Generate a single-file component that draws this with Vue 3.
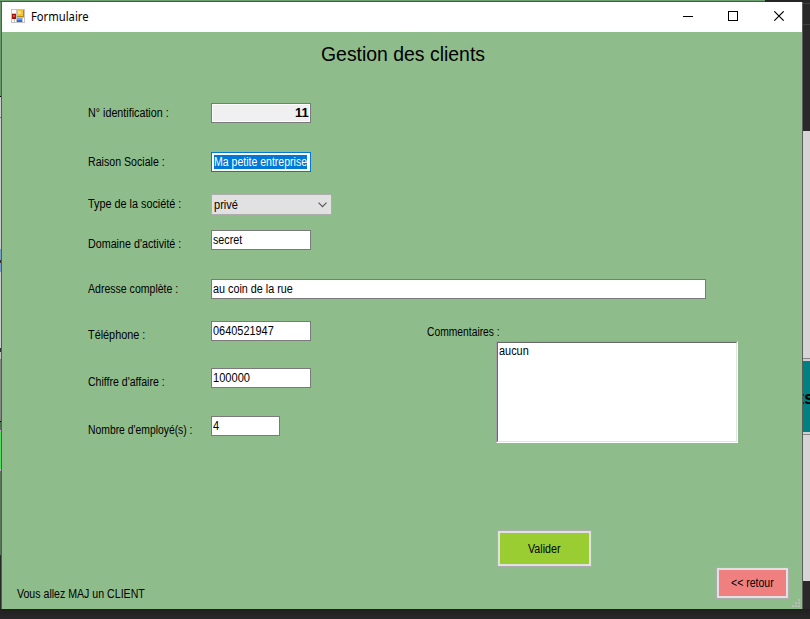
<script setup>
// Squeezes or stretches a run of text horizontally to a given width in pixels.
const vFit = {
  mounted(el, { value }) {
    el.style.transform = `scaleX(${value / el.offsetWidth})`
  },
}

const topRows = [
  { key: 'id', label: 'N° identification :', fit: 80.5, value: '11', vfit: 14 },
  { key: 'raison', label: 'Raison Sociale :', fit: 77, value: 'Ma petite entreprise', vfit: 93 },
  { key: 'type', label: 'Type de la société :', fit: 93, value: 'privé', vfit: 24 },
  { key: 'domaine', label: "Domaine d'activité :", fit: 93, value: 'secret', vfit: 29.5 },
  { key: 'adresse', label: 'Adresse complète :', fit: 90.5, value: 'au coin de la rue', vfit: 80 },
]
const bottomRows = [
  { key: 'tel', label: 'Téléphone :', fit: 57, value: '0640521947', vfit: 61 },
  { key: 'chiffre', label: "Chiffre d'affaire :", fit: 76.5, value: '100000', vfit: 37 },
  { key: 'nombre', label: 'Nombre d\'employé(s) :', fit: 104.5, value: '4', vfit: 6.5 },
]
</script>

<template>
  <div class="desktop">
    <div class="behind-top"></div>
    <div class="behind-left"></div>
    <section class="window">
      <header class="titlebar">
        <svg class="app-icon" width="14" height="14" viewBox="0 0 14 14" shape-rendering="crispEdges">
          <rect width="14" height="14" fill="#c3c3c3" />
          <rect x="1" y="1" width="4" height="3" fill="#fff" />
          <rect x="1" y="10" width="2" height="3" fill="#fff" />
          <rect x="4" y="10" width="1" height="3" fill="#fff" />
          <rect x="12" y="9" width="1" height="4" fill="#fff" />
          <rect x="1" y="5" width="4" height="5" fill="#a51208" />
          <rect x="2" y="6" width="2" height="2" fill="#e0523c" />
          <rect x="6" y="1" width="7" height="7" fill="#b98a12" />
          <rect x="6" y="1" width="6" height="6" fill="#f7c331" />
          <rect x="7" y="2" width="3" height="3" fill="#ffe08a" />
          <rect x="6" y="9" width="5" height="4" fill="#3568c8" />
          <rect x="6" y="9" width="5" height="2" fill="#6fa2f2" />
        </svg>
        <span v-fit="58" class="caption">Formulaire</span>
        <svg class="controls" width="103" height="10" viewBox="0 0 103 10">
          <g fill="none" stroke="#000" shape-rendering="crispEdges">
            <path d="M0 5.5H10" />
            <rect x="45.5" y="0.5" width="9" height="9" />
          </g>
          <path d="M91.3 0.3L100.7 9.7M100.7 0.3L91.3 9.7" fill="none" stroke="#000" stroke-width="1.1" />
        </svg>
      </header>

      <main class="form">
        <h1><span v-fit="164">Gestion des clients</span></h1>

        <div v-for="r in topRows" :key="r.key" class="row" :class="r.key">
          <div class="label"><span v-fit="r.fit">{{ r.label }}</span></div>
          <div class="field">
            <span v-fit="r.vfit">{{ r.value }}</span>
            <svg v-if="r.key === 'type'" class="chevron" width="9" height="6" viewBox="0 0 9 6">
              <path d="M0.5 0.7L4.5 4.7L8.5 0.7" fill="none" stroke="#555" stroke-width="1.1" />
            </svg>
          </div>
        </div>

        <div class="lower">
          <div class="stack">
            <div v-for="r in bottomRows" :key="r.key" class="row" :class="r.key">
              <div class="label"><span v-fit="r.fit">{{ r.label }}</span></div>
              <div class="field"><span v-fit="r.vfit">{{ r.value }}</span></div>
            </div>
          </div>
          <div class="comments">
            <div class="comment-label"><span v-fit="73">Commentaires :</span></div>
            <div class="memo"><div class="memo-inner"><span v-fit="30">aucun</span></div></div>
          </div>
        </div>

        <button class="btn validate"><span v-fit="32">Valider</span></button>
        <footer>
          <span v-fit="128" class="status">Vous allez MAJ un CLIENT</span>
          <button class="btn back"><span v-fit="43">&lt;&lt; retour</span></button>
        </footer>
        <svg class="grip" width="8" height="8" viewBox="0 0 8 8" fill="#b8bdb8" shape-rendering="crispEdges">
          <path d="M6 0h2v2h-2zM3 3h2v2h-2zM6 3h2v2h-2zM0 6h2v2h-2zM3 6h2v2h-2zM6 6h2v2h-2z" />
        </svg>
      </main>
    </section>
    <aside class="behind-right"><span>ts</span></aside>
    <div class="behind-bottom"></div>
  </div>
</template>

<style>
body {
  margin: 0;
  overflow: hidden;
}
</style>

<style scoped>
.desktop {
  display: grid;
  grid-template: 2px 607px 10px / 2px 800px 8px;
  width: 810px;
  height: 619px;
  background: #29292a;
  font: 12px/14px "Liberation Sans", Arial, sans-serif;
  color: #000;
}
span {
  display: inline-block;
  white-space: pre;
  transform-origin: 0 50%;
}
.behind-top {
  grid-column: 1 / -1;
  background: linear-gradient(#6c9f6e 0 1px, #465b46 1px) no-repeat 0 0 / 765px 2px, #252526;
}
.behind-left {
  border-right: 1px solid #4e604e;
  background: linear-gradient(
    #689769 0 94px, #000 94px 95px, #cbcbd0 95px 115px, #777 115px 116px,
    #cbcbd0 116px 247px, #789fc7 247px 258px, #333 258px 261px, #789fc7 261px 270px,
    #cbcbd0 270px 346px, #333 346px 350px, #c0c0c0 350px 357px, #858585 357px 419px,
    #000 419px 420px, #527454 420px 428px, #d5a5d1 428px 429px, #55db62 429px 467px,
    #d5a5d1 467px 469px, #5c735c 469px 553px, #29292a 553px);
}
.behind-right {
  overflow: hidden;
  border-left: 1px solid #5c5c5c;
  box-sizing: border-box;
  background: linear-gradient(
    #29292a 0 1px, #414144 1px 2px, #29292a 2px 22px, #414144 22px 23px, #29292a 23px 129px,
    #d5d5d5 129px 356px, #858585 356px 357px, #d0d0d0 357px 359px, #008080 359px 430px,
    #d0d0d0 430px 432px, #858585 432px 433px, #d5d5d5 433px 579px, #29292a 579px);
}
.behind-right span {
  margin: 386px 0 0 -5px;
  font: bold 18px/20px "Liberation Sans", Arial, sans-serif;
}
.behind-bottom {
  grid-column: 1 / -1;
  background: linear-gradient(#202021, #29292a);
}
.window {
  display: flex;
  flex-direction: column;
  background: #8fbc8b;
}
.titlebar {
  display: flex;
  height: 30px;
  padding: 0 16px 0 9px;
  box-sizing: border-box;
  background: #fff;
}
.app-icon {
  margin-top: 7px;
}
.caption {
  margin: 6px 0 0 6px;
  font: 12px/17px "Noto Sans", sans-serif;
}
.controls {
  margin: 9px 0 0 auto;
}
.form {
  position: relative;
  display: flex;
  flex-direction: column;
  flex: 1;
}
h1 {
  height: 71px;
  margin: 0;
  padding: 11px 0 0 319px;
  box-sizing: border-box;
  font-size: 20px;
  font-weight: 400;
  line-height: 23px;
}
.row {
  display: flex;
  height: 20px;
  padding-left: 86px;
}
.label {
  width: 123px;
  padding-top: 3px;
  box-sizing: border-box;
}
.field {
  display: flex;
  width: 100px;
  padding: 2px 0 0 1px;
  box-sizing: border-box;
  border: 1px solid #7a7a7a;
  background: #fff;
}
.id .field {
  justify-content: flex-end;
  padding-right: 1px;
  background: #f0f0f0;
  box-shadow: inset 0 0 0 1px #fff;
  font-weight: bold;
}
.id .field span {
  transform-origin: 100% 50%;
}
.raison {
  margin-top: 29px;
}
.raison .field {
  border-color: #0078d7;
  background: linear-gradient(#0078d7, #0078d7) no-repeat 2px 2px / 93px 14px, #fff;
  padding-left: 2px;
  color: #fff;
}
.type {
  height: 21px;
  margin-top: 22px;
}
.type .field {
  width: 121px;
  padding: 3px 4px 0 2px;
  border-color: #adadad;
  background: #e1e1e1;
  justify-content: space-between;
}
.chevron {
  margin-top: 4px;
}
.domaine {
  margin-top: 15px;
}
.domaine .label,
.stack .label {
  padding-top: 7px;
}
.adresse {
  margin-top: 29px;
}
.adresse .field {
  width: 495px;
}
.lower {
  display: flex;
  height: 231px;
}
.stack {
  display: flex;
  flex-direction: column;
  gap: 27px;
  width: 425px;
  padding-top: 22px;
}
.stack .field {
  padding-top: 2px;
}
.nombre {
  margin-top: 1px;
}
.nombre .field {
  width: 69px;
}
.comments {
  padding-top: 26px;
}
.comment-label {
  height: 16px;
}
.memo {
  width: 242px;
  height: 102px;
  margin-left: 69px;
  box-sizing: border-box;
  border: 1px solid;
  border-color: #a0a0a0 #fff #fff #a0a0a0;
}
.memo-inner {
  height: 100px;
  padding: 1px 0 0 1px;
  box-sizing: border-box;
  border: 1px solid;
  border-color: #696969 #e3e3e3 #e3e3e3 #696969;
  background: #fff;
}
.btn {
  display: flex;
  align-items: center;
  justify-content: center;
  flex: none;
  padding: 0;
  border: 1px solid #adadad;
  border-radius: 0;
  box-shadow: inset 0 0 0 2px #e1e1e1;
  font: inherit;
  color: #000;
}
.btn span {
  transform-origin: 50% 50%;
}
.validate {
  width: 95px;
  height: 37px;
  margin-left: 495px;
  background: #9acd32;
}
footer {
  display: flex;
  justify-content: space-between;
  padding: 0 13px 0 15px;
}
.status {
  margin-top: 20px;
}
.back {
  width: 73px;
  height: 32px;
  background: #f08080;
}
.grip {
  position: absolute;
  right: 2px;
  bottom: 2px;
}
</style>
